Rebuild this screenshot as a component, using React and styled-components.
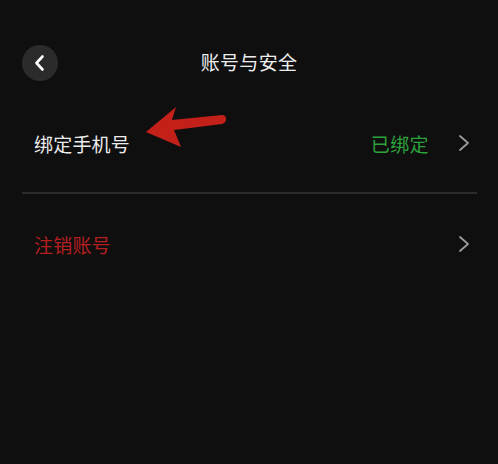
import React from 'react';
import styled, { createGlobalStyle } from 'styled-components';

const GlobalStyle = createGlobalStyle`
  html, body {
    margin: 0;
    padding: 0;
    background: #0f0f10;
  }
  body {
    font-family: "Noto Sans CJK SC", "Noto Sans", sans-serif;
    color: #ececec;
  }
`;

const Page = styled.div`
  width: 498px;
  height: 464px;
  background: #0f0f10;
  overflow: hidden;
`;

const Header = styled.header`
  position: relative;
  display: flex;
  align-items: center;
  justify-content: center;
  height: 36px;
  margin-top: 44px;
  padding: 0 22px;
`;

const BackButton = styled.button`
  position: absolute;
  left: 22px;
  top: 1px;
  width: 36px;
  height: 36px;
  border-radius: 50%;
  border: none;
  background: #2b2b2c;
  display: flex;
  align-items: center;
  justify-content: center;
  padding: 0;
  cursor: pointer;
`;

const Title = styled.h1`
  margin: 0 0 2px;
  font-size: 19px;
  font-weight: 400;
  color: #eeeeee;
  letter-spacing: 0.3px;
`;

const List = styled.div`
  margin: 14px 21px 0 22px;
`;

const Row = styled.div`
  position: relative;
  display: flex;
  align-items: center;
  height: 100px;
  padding: 0 6px 0 12px;
  border-bottom: ${(p) => (p.divider ? '2px solid #2c2c2d' : 'none')};
  box-sizing: border-box;
`;

const Label = styled.span`
  flex: 1;
  font-size: 19px;
  color: ${(p) => p.color || '#ececec'};
  letter-spacing: 0.2px;
`;

const Status = styled.span`
  font-size: 19px;
  color: #2ea23b;
  margin-right: 28px;
  letter-spacing: 0.4px;
`;

const Pointer = styled.svg`
  position: absolute;
  left: 121px;
  top: 10px;
`;

const Chevron = () => (
  <svg width="14" height="18" viewBox="0 0 14 18">
    <path d="M3 2 L11 9 L3 16" fill="none" stroke="#9a9a9a" strokeWidth="1.8" strokeLinecap="round" strokeLinejoin="round" />
  </svg>
);

export default function App() {
  return (
    <Page>
      <GlobalStyle />
      <Header>
        <BackButton aria-label="返回">
          <svg width="16" height="18" viewBox="0 0 16 18">
            <path d="M10.5 2.5 L4.5 9 L10.5 15.5" fill="none" stroke="#ffffff" strokeWidth="2.6" strokeLinecap="round" strokeLinejoin="round" />
          </svg>
        </BackButton>
        <Title>账号与安全</Title>
      </Header>
      <List>
        <Row divider>
          <Label>绑定手机号</Label>
          <Pointer width="90" height="45" viewBox="0 0 90 45">
            {/* hand-drawn red arrow */}
            <path
              d="M3 28 L33 3 L29 16 L79 11 Q83 11 83 15 Q83 19 79 20 L31 26 L38 43 Z"
              fill="#c4201a"
            />
          </Pointer>
          <Status>已绑定</Status>
          <Chevron />
        </Row>
        <Row>
          <Label color="#b51f1f">注销账号</Label>
          <Chevron />
        </Row>
      </List>
    </Page>
  );
}
